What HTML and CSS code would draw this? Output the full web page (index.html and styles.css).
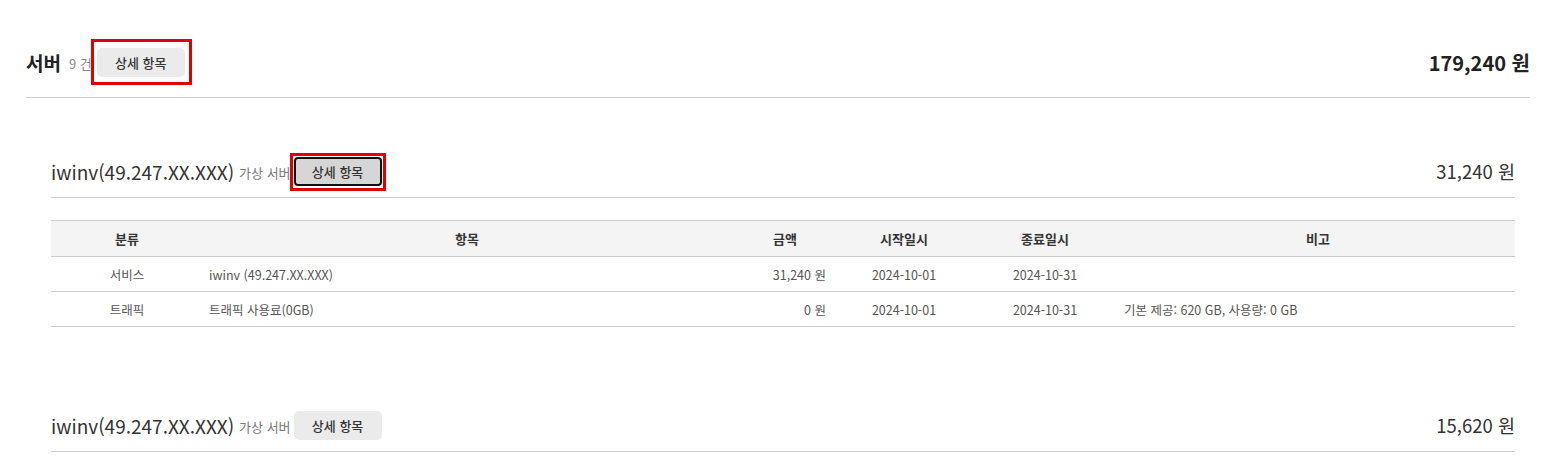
FILE: index.html
```html
<!DOCTYPE html>
<html lang="ko">
<head>
    <meta charset="utf-8">
    <title>서버 요금 상세</title>
    <link rel="stylesheet" href="styles.css">
</head>
<body>
    <div class="wrap">
        <div class="group-head">
            <div class="head-left">
                <h2 class="group-title">서버</h2>
                <span class="group-count">9 건</span>
                <button type="button" class="btn-detail mark-a">상세 항목</button>
            </div>
            <div class="group-total">179,240 원</div>
        </div>

        <div class="server-block">
            <div class="server-head">
                <div class="head-left">
                    <h3 class="server-name">iwinv(49.247.XX.XXX)</h3>
                    <span class="server-type">가상 서버</span>
                    <button type="button" class="btn-detail is-focus mark-b">상세 항목</button>
                </div>
                <div class="server-total">31,240 원</div>
            </div>

            <table class="bill">
                <colgroup>
                    <col style="width:152px">
                    <col style="width:528px">
                    <col style="width:108px">
                    <col style="width:130px">
                    <col style="width:152px">
                    <col>
                </colgroup>
                <thead>
                    <tr>
                        <th>분류</th>
                        <th>항목</th>
                        <th>금액</th>
                        <th>시작일시</th>
                        <th>종료일시</th>
                        <th>비고</th>
                    </tr>
                </thead>
                <tbody>
                    <tr>
                        <td>서비스</td>
                        <td class="item">iwinv (49.247.XX.XXX)</td>
                        <td class="price">31,240 원</td>
                        <td>2024-10-01</td>
                        <td>2024-10-31</td>
                        <td class="note"></td>
                    </tr>
                    <tr>
                        <td>트래픽</td>
                        <td class="item">트래픽 사용료(0GB)</td>
                        <td class="price">0 원</td>
                        <td>2024-10-01</td>
                        <td>2024-10-31</td>
                        <td class="note">기본 제공: 620 GB, 사용량: 0 GB</td>
                    </tr>
                </tbody>
            </table>
        </div>

        <div class="server-block">
            <div class="server-head">
                <div class="head-left">
                    <h3 class="server-name">iwinv(49.247.XX.XXX)</h3>
                    <span class="server-type">가상 서버</span>
                    <button type="button" class="btn-detail">상세 항목</button>
                </div>
                <div class="server-total">15,620 원</div>
            </div>
        </div>
    </div>
</body>
</html>
```

FILE: styles.css
```css
body { margin: 0; background: #fff; color: #333;
       font-family: "Noto Sans CJK KR", "Noto Sans", sans-serif; }
.wrap { padding: 0 16px 0 26px; }

.group-head { display: flex; align-items: center; justify-content: space-between;
              padding: 48px 0 20px; border-bottom: 1px solid #ccc; }
.head-left { display: flex; align-items: center; }
.group-title { margin: 0; font-size: 19px; font-weight: 700; line-height: 29px; color: #222; }
.group-count { margin: 2px 5px 0 8px; font-size: 13px; color: #888; }
.group-total { font-size: 20px; font-weight: 700; color: #222; line-height: 29px; }

.btn-detail { position: relative; width: 88px; height: 29px; padding: 0; border: none;
              border-radius: 5px; background: #ebebeb; color: #333; cursor: pointer;
              font-family: inherit; font-size: 13px; font-weight: 500; }
.btn-detail.is-focus { background: #d6d6d6; border: 2px solid #111; border-radius: 4px;
                       box-shadow: 0 0 0 1px #fff; }
.mark-a::after, .mark-b::after { content: ""; position: absolute; border: 3px solid #e00000; }
.mark-a::after { top: -9px; bottom: -8px; left: -6px; right: -7px; }
.mark-b::after { top: -6px; bottom: -7px; left: -6px; right: -6px; }

.server-block { padding: 59px 15px 25px 25px; }
.server-head { display: flex; align-items: center; justify-content: space-between;
               padding-bottom: 11px; border-bottom: 1px solid #ccc; }
.server-name { margin: 0; font-size: 19px; font-weight: 400; line-height: 29px; color: #333; }
.server-type { margin: 2px 3px 0 5px; font-size: 13px; color: #777; }
.server-total { font-size: 18.5px; color: #333; line-height: 29px; }

.bill { width: 100%; margin-top: 22px; border-collapse: collapse; table-layout: fixed;
        border-top: 1px solid #ccc; font-size: 13px; }
.bill th { height: 35px; padding: 0; background: #f4f4f4; font-weight: 700; color: #333;
           border-bottom: 1px solid #ccc; }
.bill td { height: 34px; padding: 0; text-align: center; color: #555; font-size: 12.5px;
           border-bottom: 1px solid #ccc; }
.bill td.item { text-align: left; padding-left: 6px; }
.bill td.price { text-align: right; padding-right: 13px; }
.bill td.note { text-align: left; padding-left: 3px; }
```
